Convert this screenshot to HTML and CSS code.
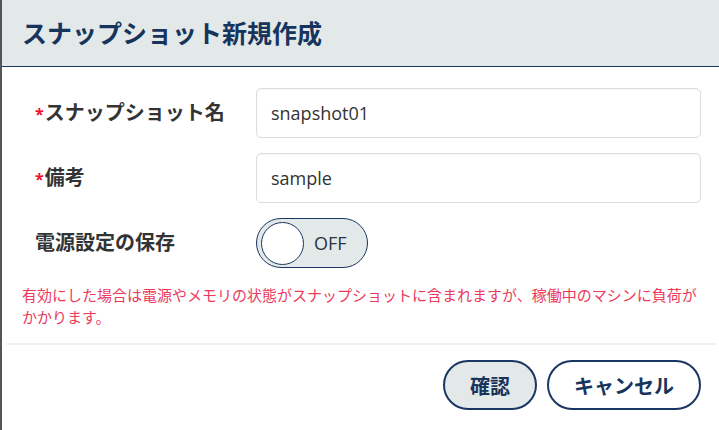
FILE: index.html
```html
<!DOCTYPE html>
<html lang="ja">
<head>
    <meta charset="UTF-8">
    <meta name="viewport" content="width=device-width, initial-scale=1.0">
    <title>スナップショット新規作成</title>
    <link rel="stylesheet" href="styles.css">
</head>
<body>
    <div class="dialog">
        <div class="dialog-header">
            <h1>スナップショット新規作成</h1>
        </div>
        <div class="dialog-body">
            <form class="snapshot-form">
                <label class="field-label" for="name"><span class="req">*</span>スナップショット名</label>
                <input class="field-input" type="text" id="name" value="snapshot01">

                <label class="field-label" for="note"><span class="req">*</span>備考</label>
                <input class="field-input" type="text" id="note" value="sample">

                <span class="field-label">電源設定の保存</span>
                <div class="toggle">
                    <span class="knob"></span>
                    <span class="toggle-text">OFF</span>
                </div>
            </form>
            <p class="notice">有効にした場合は電源やメモリの状態がスナップショットに含まれますが、稼働中のマシンに負荷がかかります。</p>
        </div>
        <div class="dialog-footer">
            <button class="btn btn-primary" type="button">確認</button>
            <button class="btn" type="button">キャンセル</button>
        </div>
    </div>
</body>
</html>
```

FILE: styles.css
```css
body {
    margin: 0;
    height: 100vh;
    overflow: hidden;
    background-color: #fff;
    font-family: "Open Sans", "Noto Sans CJK JP", sans-serif;
    color: #333;
}
.dialog {
    height: 100%;
    border-left: 2px solid #555;
    box-sizing: border-box;
    background-color: #fff;
}
.dialog-header {
    height: 66px;
    background-color: #e3e8e8;
    border-bottom: 1px solid #1a3662;
    display: flex;
    align-items: center;
    padding-left: 20px;
}
h1 {
    margin: 0;
    font-size: 25px;
    line-height: 30px;
    font-weight: bold;
    color: #17345c;
}
.dialog-body {
    padding: 21px 18px 0 20px;
}
.snapshot-form {
    display: grid;
    grid-template-columns: 221px 1fr;
    row-gap: 15px;
    align-items: center;
    padding-left: 13px;
}
.field-label {
    font-size: 20px;
    font-weight: bold;
    color: #333;
    line-height: 24px;
}
.req {
    color: #f0102a;
    font-size: 16px;
    margin-right: 1px;
}
.field-input {
    height: 50px;
    box-sizing: border-box;
    border: 1px solid #dcdcdc;
    border-radius: 5px;
    padding: 0 14px;
    font-family: "Open Sans", "Noto Sans CJK JP", sans-serif;
    font-size: 18px;
    color: #333;
    box-shadow: inset 0 1px 2px rgba(0, 0, 0, 0.04);
}
.toggle {
    width: 112px;
    height: 50px;
    box-sizing: border-box;
    border: 1px solid #1a3662;
    border-radius: 25px;
    background-color: #e3e8e8;
    display: flex;
    align-items: center;
    padding-left: 4px;
    gap: 10px;
}
.knob {
    width: 43px;
    height: 43px;
    box-sizing: border-box;
    border-radius: 50%;
    border: 1px solid #1a3662;
    background-color: #fff;
}
.toggle-text {
    font-size: 18px;
    color: #2a3340;
}
.notice {
    margin: 16px 0 0;
    font-size: 15px;
    line-height: 22px;
    color: #ec3a5c;
}
.dialog-footer {
    margin: 15px 3px 0 4px;
    border-top: 2px solid #f0f0f0;
    padding: 15px 15px 0 0;
    display: flex;
    justify-content: flex-end;
    gap: 10px;
}
.btn {
    height: 50px;
    padding: 0 25px;
    border: 2px solid #1a3662;
    border-radius: 25px;
    background-color: #fff;
    color: #17345c;
    font-family: "Open Sans", "Noto Sans CJK JP", sans-serif;
    font-size: 20px;
    font-weight: bold;
    cursor: pointer;
}
.btn-primary {
    background-color: #e3e8e8;
}
```
